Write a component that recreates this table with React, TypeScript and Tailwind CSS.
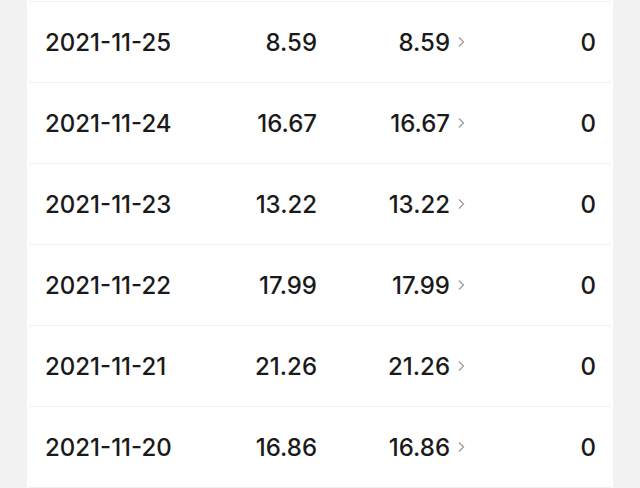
import React from 'react';

interface Row {
  date: string;
  amount: string;
  settled: string;
  pending: string;
}

const rows: Row[] = [
  { date: '2021-11-25', amount: '8.59', settled: '8.59', pending: '0' },
  { date: '2021-11-24', amount: '16.67', settled: '16.67', pending: '0' },
  { date: '2021-11-23', amount: '13.22', settled: '13.22', pending: '0' },
  { date: '2021-11-22', amount: '17.99', settled: '17.99', pending: '0' },
  { date: '2021-11-21', amount: '21.26', settled: '21.26', pending: '0' },
  { date: '2021-11-20', amount: '16.86', settled: '16.86', pending: '0' },
];

const Chevron: React.FC = () => (
  <svg width="9" height="12" viewBox="0 0 9 12" fill="none" className="ml-[7px] mb-[3px]">
    <path d="M2 1.5 L6.5 6 L2 10.5" stroke="#a0a0a0" strokeWidth="1.4" />
  </svg>
);

export default function App() {
  return (
    <div
      className="w-[640px] h-[488px] overflow-hidden bg-[#f2f2f2] px-[27px] flex"
      style={{ fontFamily: 'Inter, "Noto Sans", sans-serif' }}
    >
      <div className="w-[586px] bg-white flex flex-col">
        <div className="h-[2px] border-b border-[#f0f0f0] mx-[2px]" />
        {rows.map(r => (
          <div
            key={r.date}
            className="h-[81px] shrink-0 border-b border-[#f0f0f0] mx-[2px] flex items-center text-[24px] font-medium text-[#1a1a1a] pt-[2px]"
          >
            <div className="w-[158px] pl-[16px] whitespace-nowrap">{r.date}</div>
            <div className="w-[130px] text-right">{r.amount}</div>
            <div className="w-[133px] flex items-center justify-end">
              <span>{r.settled}</span>
            </div>
            <Chevron />
            <div className="flex-1 text-right pr-[15px]">{r.pending}</div>
          </div>
        ))}
      </div>
    </div>
  );
}
